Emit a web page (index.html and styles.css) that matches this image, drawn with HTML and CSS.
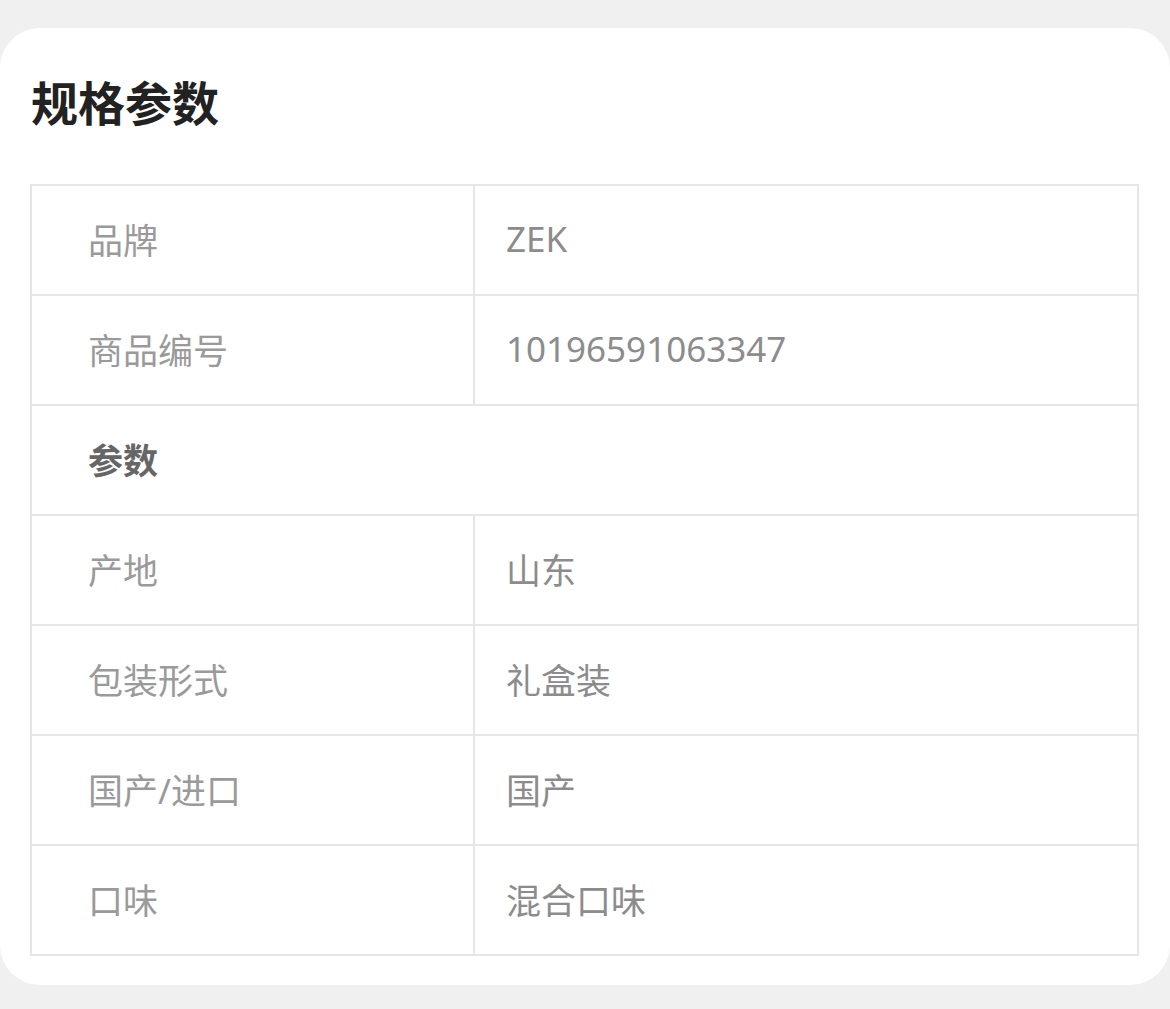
FILE: index.html
```html
<!DOCTYPE html>
<html lang="zh">
<head>
<meta charset="utf-8">
<link rel="stylesheet" href="styles.css">
</head>
<body>
<div class="card">
  <h1 class="title">规格参数</h1>
  <div class="table">
    <div class="row"><div class="cell key">品牌</div><div class="cell val">ZEK</div></div>
    <div class="row"><div class="cell key">商品编号</div><div class="cell val">10196591063347</div></div>
    <div class="row"><div class="cell group">参数</div></div>
    <div class="row"><div class="cell key">产地</div><div class="cell val">山东</div></div>
    <div class="row"><div class="cell key">包装形式</div><div class="cell val">礼盒装</div></div>
    <div class="row"><div class="cell key">国产/进口</div><div class="cell val">国产</div></div>
    <div class="row"><div class="cell key">口味</div><div class="cell val">混合口味</div></div>
  </div>
</div>
</body>
</html>
```

FILE: styles.css
```css
html, body {
  margin: 0;
  padding: 0;
  background: #f0f0f0;
  font-family: "Noto Sans", "Noto Sans CJK SC", sans-serif;
}
body {
  padding-top: 28px;
  height: 1009px;
  box-sizing: border-box;
}
.card {
  background: #ffffff;
  border-radius: 40px;
  width: 1170px;
  height: 957px;
  box-sizing: border-box;
  padding: 0 31px 0 30px;
  overflow: hidden;
}
.title {
  margin: 0;
  padding: 45px 0 0 1px;
  height: 110px;
  box-sizing: border-box;
  font-size: 47px;
  line-height: 60px;
  font-weight: 700;
  color: #222222;
}
.table {
  margin-top: 46px;
  width: 1109px;
  border-top: 2px solid #e6e6e6;
  border-left: 2px solid #e6e6e6;
  box-sizing: border-box;
}
.row {
  display: flex;
  height: 110px;
  border-bottom: 2px solid #e6e6e6;
  box-sizing: border-box;
}
.cell {
  display: flex;
  align-items: center;
  font-size: 35px;
  padding-bottom: 4px;
  border-right: 2px solid #e6e6e6;
  box-sizing: border-box;
}
.key {
  width: 443px;
  padding-left: 56px;
  color: #9a9a9a;
}
.val {
  flex: 1;
  padding-left: 31px;
  color: #8c8c8c;
}
.group {
  flex: 1;
  padding-left: 56px;
  font-weight: 700;
  color: #666666;
}
```
